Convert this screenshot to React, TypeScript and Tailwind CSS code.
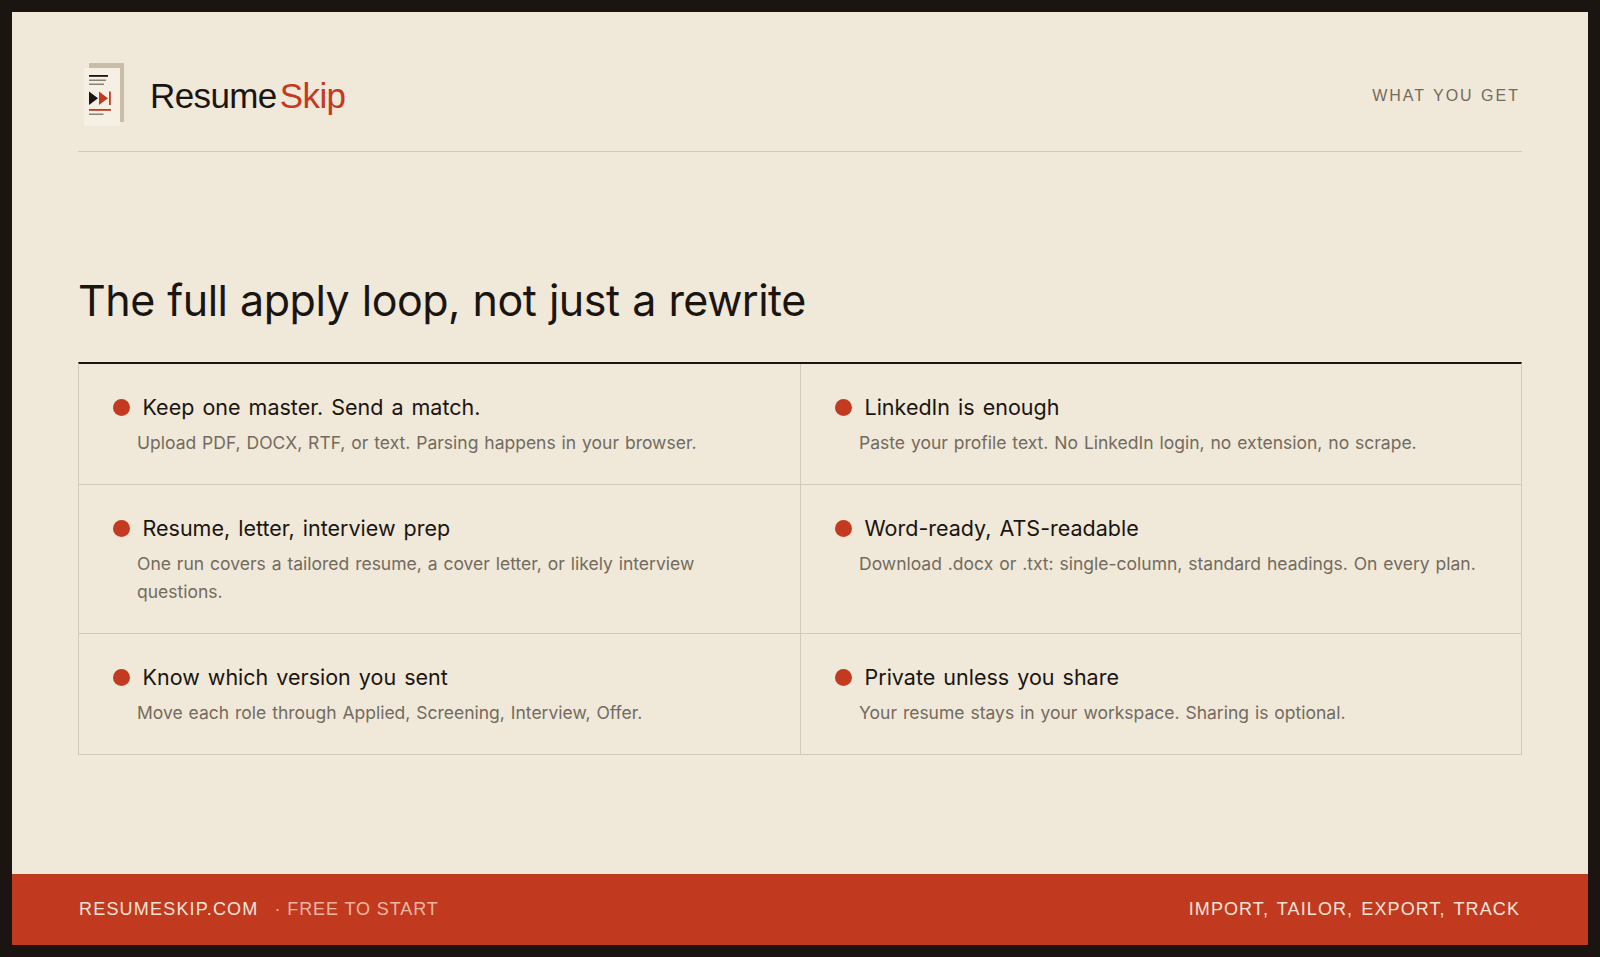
const features = [
  [
    { title: 'Keep one master. Send a match.', body: 'Upload PDF, DOCX, RTF, or text. Parsing happens in your browser.' },
    { title: 'LinkedIn is enough', body: 'Paste your profile text. No LinkedIn login, no extension, no scrape.' },
  ],
  [
    { title: 'Resume, letter, interview prep', body: 'One run covers a tailored resume, a cover letter, or likely interview questions.' },
    { title: 'Word-ready, ATS-readable', body: 'Download .docx or .txt: single-column, standard headings. On every plan.' },
  ],
  [
    { title: 'Know which version you sent', body: 'Move each role through Applied, Screening, Interview, Offer.' },
    { title: 'Private unless you share', body: 'Your resume stays in your workspace. Sharing is optional.' },
  ],
];

function Logo() {
  return (
    <svg width="40" height="63" viewBox="0 0 40 63" className="mb-[4px] shrink-0">
      <rect x="5" y="0" width="35" height="59" rx="1" fill="#c9bdaa" />
      <rect x="0" y="5" width="36" height="58" rx="1" fill="#f6f0e4" />
      <rect x="5" y="12" width="19" height="1.8" fill="#1a1510" />
      <rect x="5" y="16.5" width="17" height="1.5" fill="#8a8274" />
      <rect x="5" y="20.5" width="15" height="1.5" fill="#8a8274" />
      <polygon points="5,28.5 5,42 14,35.2" fill="#1a1510" />
      <polygon points="15,28.5 15,42 24,35.2" fill="#c43a20" />
      <rect x="25" y="28.5" width="1.8" height="13.5" fill="#c43a20" />
      <rect x="5" y="46" width="22" height="1.8" fill="#c43a20" />
      <rect x="5" y="50.5" width="14.5" height="1.5" fill="#8a8274" />
    </svg>
  );
}

export default function App() {
  return (
    <div className="h-[957px] w-[1600px] overflow-hidden bg-[#1a1510] p-3 font-['Inter',sans-serif] antialiased">
      <div className="flex h-full flex-col bg-[#f0e8d9]">
        <div className="flex-1 px-[66px]">
          <header className="flex h-[140px] items-center justify-between border-b border-[#d3c9b7] pt-[30px] pl-[6px] pr-[2px]">
            <div className="flex items-center gap-[26px]">
              <Logo />
              <span className="font-['Liberation_Sans',sans-serif] text-[35px] tracking-[-0.6px] text-[#1a1510]">
                Resume<span className="ml-[3px] text-[#c43a20]">Skip</span>
              </span>
            </div>
            <span className="mb-[2px] font-['Liberation_Sans',sans-serif] text-[16px] tracking-[2px] [word-spacing:1px] text-[#736b5e]">WHAT YOU GET</span>
          </header>

          <h1 className="mt-[118px] text-[43px] leading-[60px] tracking-[-0.5px] [word-spacing:1px] text-[#1a1510]">
            The full apply loop, not just a rewrite
          </h1>

          <div className="mt-[32px] border-x border-b border-t-2 border-[#d3c9b7] border-t-[#1a1510]">
            {features.map((row, i) => (
              <div key={i} className={`grid grid-cols-2 ${i > 0 ? 'border-t border-[#d3c9b7]' : ''}`}>
                {row.map((f, j) => (
                  <div key={f.title} className={`px-[34px] pt-[29px] pb-[27px] ${j === 1 ? 'border-l border-[#d3c9b7]' : ''}`}>
                    <div className="flex items-center gap-[12.5px]">
                      <span className="h-[17px] w-[17px] shrink-0 rounded-full bg-[#c43a20]" />
                      <span className="text-[21.5px] leading-[28px] [word-spacing:2px] text-[#1a1510]">{f.title}</span>
                    </div>
                    <p className="mt-[8px] pl-[24px] text-[17.5px] leading-[28px] [word-spacing:1px] text-[#736b5e]">{f.body}</p>
                  </div>
                ))}
              </div>
            ))}
          </div>
        </div>

        <footer className="flex h-[71px] items-center justify-between bg-[#c13a20] pl-[67px] pr-[68px] font-['Liberation_Sans',sans-serif] text-[18px] tracking-[1.2px]">
          <div className="flex items-center">
            <span className="text-[#f5e4d6]">RESUMESKIP.COM</span>
            <span className="ml-[16px] tracking-[0.9px] text-[#eeb5a0]">· FREE TO START</span>
          </div>
          <span className="tracking-[1.1px] [word-spacing:2px] text-[#f5e4d6]">IMPORT, TAILOR, EXPORT, TRACK</span>
        </footer>
      </div>
    </div>
  );
}
